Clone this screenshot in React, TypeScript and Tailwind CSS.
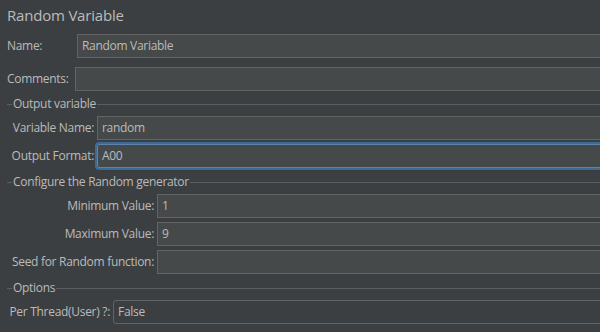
import React from 'react';

const font = { fontFamily: '"Open Sans", "Noto Sans", sans-serif' };

const Field: React.FC<{ value?: string; focused?: boolean; combo?: boolean }> = ({ value = '', focused, combo }) => {
  let cls = 'flex-1 h-[24px] flex items-center pl-[4px] border border-[#646464] bg-[#45494a]';
  if (focused) cls = 'flex-1 h-[24px] flex items-center pl-[4px] border border-[#5a84ad] bg-[#45494a] rounded-[2px] outline-2 outline-[#3e6a96]';
  if (combo) cls = 'flex-1 h-[24px] flex items-center pl-[4px] border border-[#646464] bg-[#3c3f41] rounded-[3px]';
  return <div className={cls}>{value}</div>;
};

const Legend: React.FC<{ title: string }> = ({ title }) => (
  <div className="flex items-center h-[18px] mt-[5px] pl-[7px]">
    <div className="w-[5px] h-px bg-[#5b5d5f]" />
    <span className="px-[1px] leading-[18px]">{title}</span>
    <div className="flex-1 h-px bg-[#5b5d5f]" />
  </div>
);

const Row: React.FC<{ label: string; labelWidth: string; value?: string; focused?: boolean; combo?: boolean; mt: string }> = ({
  label,
  labelWidth,
  value,
  focused,
  combo,
  mt,
}) => (
  <div className={`flex items-center ${mt}`}>
    <div className={`${labelWidth} text-right pr-[3px] shrink-0 whitespace-nowrap`}>{label}</div>
    <Field value={value} focused={focused} combo={combo} />
  </div>
);

export default function App() {
  return (
    <div className="w-[600px] h-[332px] overflow-hidden bg-[#3c3f41] text-[#bbbbbb] text-[12px] tracking-[-0.3px]" style={font}>
      <div className="w-[620px]">
        <div className="h-[34px] pl-[7px] pt-[4px] text-[15px] leading-[22px] tracking-[-0.2px]">Random Variable</div>

        <div className="flex items-center h-[24px]">
          <div className="w-[77px] pl-[7px] shrink-0">Name:</div>
          <Field value="Random Variable" />
        </div>
        <div className="flex items-center h-[24px] mt-[9px]">
          <div className="w-[75px] pl-[7px] shrink-0">Comments:</div>
          <Field />
        </div>

        <div className="mt-[-1px]">
          <Legend title="Output variable" />
        </div>
        <Row label="Variable Name:" labelWidth="w-[97px]" value="random" mt="mt-[3px]" />
        <Row label="Output Format:" labelWidth="w-[97px]" value="A00" focused mt="mt-[4px]" />

        <Legend title="Configure the Random generator" />
        <Row label="Minimum Value:" labelWidth="w-[157px]" value="1" mt="mt-[3px]" />
        <Row label="Maximum Value:" labelWidth="w-[157px]" value="9" mt="mt-[4px]" />
        <Row label="Seed for Random function:" labelWidth="w-[157px]" mt="mt-[4px]" />

        <Legend title="Options" />
        <Row label="Per Thread(User) ?:" labelWidth="w-[113px]" value="False" combo mt="mt-[3px]" />
      </div>
    </div>
  );
}
